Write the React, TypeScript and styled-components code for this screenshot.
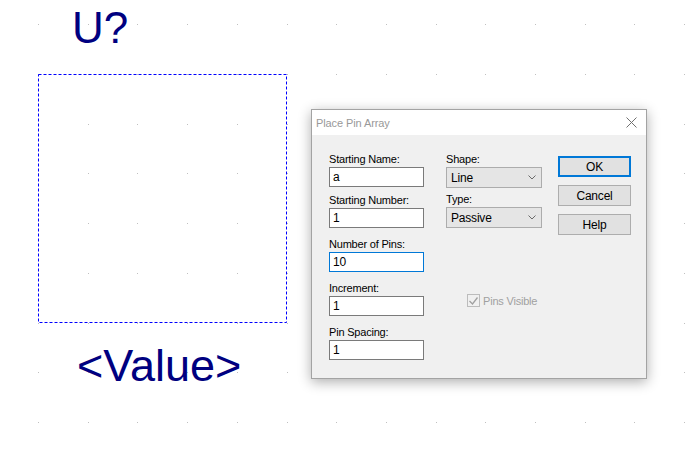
import React from 'react';
import styled, { createGlobalStyle } from 'styled-components';

const GlobalStyle = createGlobalStyle`
  html, body {
    margin: 0;
    padding: 0;
    background: #ffffff;
    overflow: hidden;
  }
`;

const uiFont = `"Liberation Sans", Arial, sans-serif`;

// schematic editor sheet
const Sheet = styled.div`
  position: relative;
  width: 689px;
  height: 464px;
  background: #ffffff;
  overflow: hidden;
`;

const SheetDrawing = styled.svg`
  position: absolute;
  left: 0;
  top: 0;
`;

const PartText = styled.div<{ $x: number; $y: number; $size: number }>`
  position: absolute;
  left: ${({ $x }) => $x}px;
  top: ${({ $y }) => $y}px;
  font-family: "Liberation Sans", Arial, sans-serif;
  font-size: ${({ $size }) => $size}px;
  line-height: 1;
  color: #000080;
  white-space: nowrap;
`;

// dialog window
const Dialog = styled.div`
  position: absolute;
  left: 311px;
  top: 109px;
  width: 336px;
  height: 270px;
  box-sizing: border-box;
  border: 1px solid #a3a3a3;
  background: #f0f0f0;
  display: flex;
  flex-direction: column;
  box-shadow: 0 3px 12px rgba(0, 0, 0, 0.32);
`;

const TitleBar = styled.div`
  height: 25px;
  background: #ffffff;
  display: flex;
  align-items: center;
  justify-content: space-between;
  padding: 0 9px 0 4px;
  flex-shrink: 0;
`;

const TitleText = styled.span`
  font-family: "Liberation Sans", Arial, sans-serif;
  font-size: 11px;
  letter-spacing: -0.1px;
  color: #999999;
`;

const DialogBody = styled.div`
  flex: 1;
  display: flex;
  padding: 17px 15px 0 17px;
  font-family: ${uiFont};
  font-size: 11px;
  letter-spacing: -0.2px;
  color: #000000;
`;

const Column = styled.div<{ $width: number; $gap?: number }>`
  width: ${({ $width }) => $width}px;
  display: flex;
  flex-direction: column;
  margin-right: ${({ $gap }) => $gap ?? 0}px;
`;

const Field = styled.div<{ $top?: number }>`
  display: flex;
  flex-direction: column;
  margin-top: ${({ $top }) => $top ?? 0}px;
`;

const Label = styled.label`
  height: 14px;
  line-height: 14px;
  margin-bottom: 1px;
  white-space: nowrap;
`;

const TextBox = styled.div<{ $focused?: boolean }>`
  height: 20px;
  box-sizing: border-box;
  border: 1px solid ${({ $focused }) => ($focused ? '#0078d7' : '#7a7a7a')};
  background: #ffffff;
  padding-left: 3px;
  line-height: 18px;
  font-size: 12px;
`;

const Select = styled.div`
  height: 21px;
  box-sizing: border-box;
  border: 1px solid #acacac;
  background: #e5e5e5;
  padding: 0 5px 0 4px;
  display: flex;
  align-items: center;
  justify-content: space-between;
  font-size: 12px;
`;

const Button = styled.div<{ $default?: boolean }>`
  height: 21px;
  box-sizing: border-box;
  border: ${({ $default }) => ($default ? '2px solid #0078d7' : '1px solid #adadad')};
  background: #e1e1e1;
  display: flex;
  align-items: center;
  justify-content: center;
  margin-bottom: 8px;
  font-size: 12px;
`;

const CheckRow = styled.div`
  display: flex;
  align-items: center;
  margin-top: 66px;
  padding-left: 21px;
  color: #a0a0a0;
  white-space: nowrap;
`;

const CheckBox = styled.div`
  width: 13px;
  height: 13px;
  flex-shrink: 0;
  box-sizing: border-box;
  border: 1px solid #bcbcbc;
  background: #f0f0f0;
  margin-right: 3px;
  display: flex;
  align-items: center;
  justify-content: center;
`;

const Chevron = () => (
  <svg width="8" height="5" viewBox="0 0 8 5">
    <polyline points="0.5,0.5 4,4 7.5,0.5" fill="none" stroke="#6a6a6a" strokeWidth="1" />
  </svg>
);

const CloseIcon = () => (
  <svg width="11" height="11" viewBox="0 0 11 11">
    <path d="M0.5 0.5 L10.5 10.5 M10.5 0.5 L0.5 10.5" stroke="#707070" strokeWidth="1" />
  </svg>
);

const gridXs = Array.from({ length: 14 }, (_, i) => Math.round(38 + i * 49.7 + 0.01));
const gridYs = Array.from({ length: 9 }, (_, j) => Math.round(24 + j * 49.75 + 0.01));

const App: React.FC = () => {
  return (
    <>
      <GlobalStyle />
      <Sheet>
        <SheetDrawing width="689" height="464">
          {gridYs.map((y) =>
            gridXs.map((x) => <rect key={`${x}-${y}`} x={x} y={y} width="1" height="1" fill="#c0c0c0" />)
          )}
          <rect x="38.5" y="74.5" width="248" height="248" fill="none" stroke="#0000ff" strokeWidth="1" strokeDasharray="3 2" />
        </SheetDrawing>
        <PartText $x={72} $y={6} $size={44}>U?</PartText>
        <PartText $x={77} $y={343} $size={45}>&lt;Value&gt;</PartText>

        <Dialog>
          <TitleBar>
            <TitleText>Place Pin Array</TitleText>
            <CloseIcon />
          </TitleBar>
          <DialogBody>
            <Column $width={95} $gap={22}>
              <Field>
                <Label>Starting Name:</Label>
                <TextBox>a</TextBox>
              </Field>
              <Field $top={6}>
                <Label>Starting Number:</Label>
                <TextBox>1</TextBox>
              </Field>
              <Field $top={9}>
                <Label>Number of Pins:</Label>
                <TextBox $focused>10</TextBox>
              </Field>
              <Field $top={9}>
                <Label>Increment:</Label>
                <TextBox>1</TextBox>
              </Field>
              <Field $top={9}>
                <Label>Pin Spacing:</Label>
                <TextBox>1</TextBox>
              </Field>
            </Column>
            <Column $width={96} $gap={16}>
              <Field>
                <Label>Shape:</Label>
                <Select>
                  <span>Line</span>
                  <Chevron />
                </Select>
              </Field>
              <Field $top={4}>
                <Label>Type:</Label>
                <Select>
                  <span>Passive</span>
                  <Chevron />
                </Select>
              </Field>
              <CheckRow>
                <CheckBox>
                  <svg width="9" height="8" viewBox="0 0 9 8">
                    <polyline points="0.5,4 3.5,7 8.5,0.5" fill="none" stroke="#a0a0a0" strokeWidth="1.3" />
                  </svg>
                </CheckBox>
                <span>Pins Visible</span>
              </CheckRow>
            </Column>
            <Column $width={73}>
              <div style={{ height: 4 }} />
              <Button $default>OK</Button>
              <Button>Cancel</Button>
              <Button>Help</Button>
            </Column>
          </DialogBody>
        </Dialog>
      </Sheet>
    </>
  );
};

export default App;
